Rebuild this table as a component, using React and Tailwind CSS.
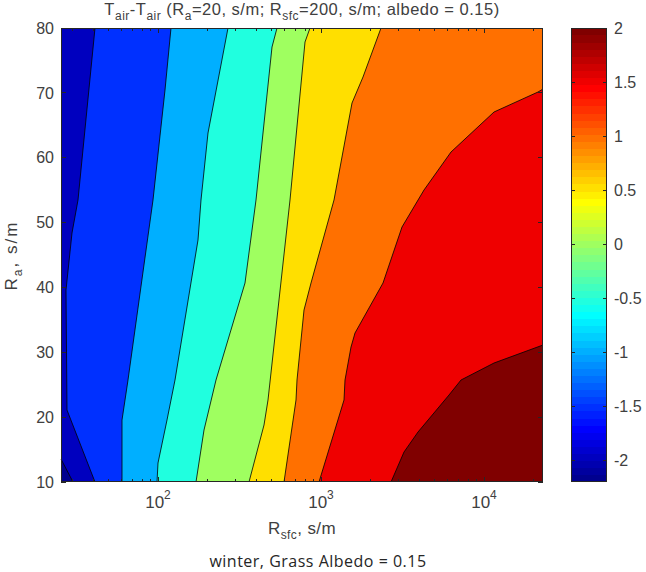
import React from "react";

const X0 = 61, X1 = 543, Y0 = 28, Y1 = 482;

function jet(i) {
  let r, g, b;
  if (i <= 23) r = 0; else if (i <= 38) r = (i - 23) / 16; else if (i <= 55) r = 1; else r = 1 - (i - 55) / 16;
  if (i <= 7) g = 0; else if (i <= 22) g = (i - 7) / 16; else if (i <= 39) g = 1; else if (i <= 54) g = 1 - (i - 39) / 16; else g = 0;
  if (i <= 6) b = 0.5625 + i * 0.0625; else if (i <= 23) b = 1; else if (i <= 39) b = 1 - (i - 23) / 16; else b = 0;
  const h = (v) => Math.round(Math.max(0, Math.min(1, v)) * 255);
  return `rgb(${h(r)},${h(g)},${h(b)})`;
}

const B1 = [[95, 28], [78, 200], [72, 233], [66, 290], [67, 410], [95, 482]];
const B2 = [[171, 28], [165, 90], [153, 200], [128, 380], [122, 420], [122, 482]];
const B3 = [[228, 28], [208, 133], [201, 200], [198, 240], [175, 380], [167, 420], [158, 463], [157, 482]];
const B4 = [[277, 28], [272, 47], [256, 200], [245, 283], [216, 380], [204, 430], [196, 482]];
const B5 = [[310, 28], [305, 42], [290, 200], [268, 400], [264, 425], [249, 482]];
const B6 = [[381, 28], [363, 77], [352, 103], [334, 200], [311, 283], [304, 310], [297, 380], [296, 400], [284, 482]];
const B7 = [[543, 89], [538, 92], [494, 112], [451, 152], [424, 190], [402, 227], [383, 283], [355, 333], [351, 347], [345, 380], [344, 400], [319, 482]];
const B8 = [[543, 345], [494, 363], [461, 380], [449, 395], [418, 432], [404, 452], [391, 482]];
const CORNER = [[61, 459], [73, 482]];

const pts = (a) => a.map((p) => p.join(",")).join(" ");
const rightOf = (a) => pts([...a, [X1, Y1], [X1, Y0]]);
const closeRight = (a) => pts([...a, [X1, Y1]]);

const xOf = (R) => 158 + (Math.log10(R) - 2) * 163;
const yOf = (v) => Y1 - ((v - 10) * (Y1 - Y0)) / 70;
const cbY = (v) => Y0 + (2 - v) * 108;

const minorX = [];
[10, 100, 1000, 10000].forEach((d) => {
  for (let m = 2; m <= 9; m++) {
    const x = xOf(m * d);
    if (x > X0 + 1 && x < X1 - 1) minorX.push(x);
  }
});
const majorX = [[100, "2"], [1000, "3"], [10000, "4"]];
const yVals = [10, 20, 30, 40, 50, 60, 70, 80];
const cbVals = [2, 1.5, 1, 0.5, 0, -0.5, -1, -1.5, -2];

function Chart() {
  const stripes = [];
  const h = (Y1 - Y0) / 64;
  for (let i = 0; i < 64; i++) {
    stripes.push(
      <rect key={i} x={571} y={Y1 - (i + 1) * h} width={36} height={h + 0.4} fill={jet(i)} />
    );
  }
  const lines = [B1, B2, B3, B4, B5, B6, B7, B8, CORNER];
  return (
    <svg width="620" height="500" viewBox="26 18 620 500" className="block">
      <g shapeRendering="geometricPrecision">
        <rect x={X0} y={Y0} width={X1 - X0} height={Y1 - Y0} fill={jet(3)} />
        <polygon points={pts([...CORNER, [X0, Y1]])} fill={jet(0)} />
        <polygon points={rightOf(B1)} fill={jet(10)} />
        <polygon points={rightOf(B2)} fill={jet(18)} />
        <polygon points={rightOf(B3)} fill={jet(25)} />
        <polygon points={rightOf(B4)} fill={jet(33)} />
        <polygon points={rightOf(B5)} fill={jet(41)} />
        <polygon points={rightOf(B6)} fill={jet(48)} />
        <polygon points={closeRight(B7)} fill={jet(56)} />
        <polygon points={closeRight(B8)} fill={jet(63)} />
        {lines.map((l, i) => (
          <polyline key={i} points={pts(l)} fill="none" stroke="#000" strokeWidth="0.8" />
        ))}
      </g>
      <g stroke="#262626" strokeWidth="1" shapeRendering="crispEdges">
        {yVals.map((v) => (
          <g key={v}>
            <line x1={X0} x2={X0 + 5} y1={yOf(v)} y2={yOf(v)} />
            <line x1={X1 - 5} x2={X1} y1={yOf(v)} y2={yOf(v)} />
          </g>
        ))}
        {minorX.map((x, i) => (
          <g key={i}>
            <line x1={x} x2={x} y1={Y1} y2={Y1 - 3} />
            <line x1={x} x2={x} y1={Y0} y2={Y0 + 3} />
          </g>
        ))}
        {majorX.map(([R]) => (
          <g key={R}>
            <line x1={xOf(R)} x2={xOf(R)} y1={Y1} y2={Y1 - 5} />
            <line x1={xOf(R)} x2={xOf(R)} y1={Y0} y2={Y0 + 5} />
          </g>
        ))}
        <rect x={X0 + 0.5} y={Y0 + 0.5} width={X1 - X0 - 1} height={Y1 - Y0 - 1} fill="none" />
      </g>
      <g shapeRendering="crispEdges">{stripes}</g>
      <g stroke="#262626" strokeWidth="1" shapeRendering="crispEdges">
        {cbVals.map((v) => (
          <g key={v}>
            <line x1={571} x2={575} y1={cbY(v)} y2={cbY(v)} />
            <line x1={603} x2={607} y1={cbY(v)} y2={cbY(v)} />
          </g>
        ))}
        <rect x={571.5} y={Y0 + 0.5} width={35} height={Y1 - Y0 - 1} fill="none" />
      </g>
      <g fill="#404040" fontFamily="'Liberation Sans', Arial, sans-serif" fontSize="16">
        {yVals.map((v) => (
          <text key={v} x={54} y={yOf(v)} dy="0.36em" textAnchor="end">{v}</text>
        ))}
        {majorX.map(([R, e]) => (
          <text key={R} x={xOf(R)} y={508} textAnchor="middle" fontSize="17">
            10<tspan dy="-9" fontSize="12">{e}</tspan>
          </text>
        ))}
        {cbVals.map((v) => (
          <text key={v} x={614} y={cbY(v)} dy="0.36em">{String(v)}</text>
        ))}
      </g>
    </svg>
  );
}

const Sub = ({ children }) => (
  <span className="relative top-[5px] text-[12px]">{children}</span>
);

export default function App() {
  return (
    <div className="w-[646px] h-[572px] bg-white flex flex-col overflow-hidden text-[#404040] font-['Liberation_Sans',Arial,sans-serif]">
      <div className="h-[18px] ml-[61px] w-[482px] text-center text-[16.5px] tracking-[0.5px] leading-[18px] whitespace-nowrap">
        T<Sub>air</Sub>-T<Sub>air</Sub> (R<Sub>a</Sub>=20, s/m; R<Sub>sfc</Sub>=200, s/m; albedo = 0.15)
      </div>
      <div className="flex h-[500px]">
        <div className="w-[26px] mt-[10px] h-[454px] flex items-center justify-center">
          <span className="-rotate-90 whitespace-nowrap text-[17px] tracking-[2px] leading-[17px]">
            R<Sub>a</Sub>, s/m
          </span>
        </div>
        <Chart />
      </div>
      <div className="h-[28px] ml-[61px] w-[482px] text-center text-[17px] tracking-[0.4px] leading-[22px] whitespace-nowrap">
        R<Sub>sfc</Sub>, s/m
      </div>
      <div className="h-[26px] pt-[2px] pr-[10px] text-center text-[16px] tracking-[0.5px] leading-[26px] text-[#262626] font-['Open_Sans',sans-serif] whitespace-nowrap">
        winter, Grass Albedo = 0.15
      </div>
    </div>
  );
}
